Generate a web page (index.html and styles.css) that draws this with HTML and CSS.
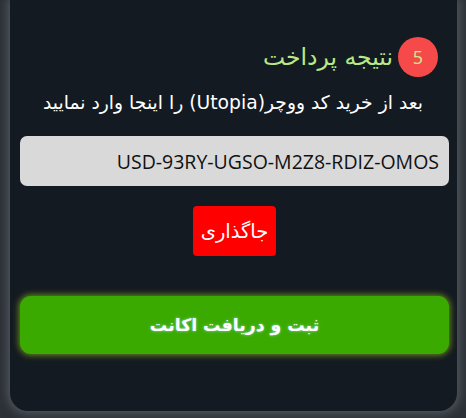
FILE: index.html
```html
<!DOCTYPE html>
<html lang="fa" dir="rtl">
<head>
<meta charset="utf-8">
<link rel="stylesheet" href="styles.css">
</head>
<body>
<div class="card">
  <h2 class="step-title"><span class="badge">5</span><span class="title-text">نتیجه پرداخت</span></h2>
  <p class="hint">بعد از خرید کد ووچر(Utopia) را اینجا وارد نمایید</p>
  <input class="code-input" type="text" value="USD-93RY-UGSO-M2Z8-RDIZ-OMOS" dir="ltr">
  <div class="paste-row"><button class="paste-btn">جاگذاری</button></div>
  <button class="submit-btn">ثبت و دریافت اکانت</button>
</div>
</body>
</html>
```
FILE: styles.css
```css
html, body {
  margin: 0;
  padding: 0;
  background: #2c3137;
  height: 418px;
  overflow: hidden;
}
body {
  padding: 0 9px 0 10px;
  font-family: "DejaVu Sans", "Noto Sans", sans-serif;
}
.card {
  background: #141a21;
  height: 411px;
  border-radius: 0 0 18px 18px;
  box-shadow: 0 0 10px 2px rgba(120, 128, 136, 0.55);
  padding: 37px 8px 0 10px;
  box-sizing: border-box;
  display: flex;
  flex-direction: column;
}
.step-title {
  margin: 0;
  display: flex;
  align-items: center;
  gap: 5px;
  padding-right: 11px;
  font-weight: normal;
  height: 40px;
}
.badge {
  flex: none;
  width: 40px;
  height: 40px;
  border-radius: 50%;
  background: #f64a4a;
  color: #c4f08a;
  font-family: "Open Sans", "Noto Sans", sans-serif;
  font-size: 18px;
  display: flex;
  align-items: center;
  justify-content: center;
}
.title-text {
  color: #b8e986;
  font-size: 23.5px;
  font-family: "DejaVu Sans", sans-serif;
  line-height: 40px;
}
.hint {
  margin: 13px 0 0 0;
  padding-right: 26px;
  color: #ffffff;
  font-size: 18.75px;
  line-height: 26px;
  text-align: right;
}
.code-input {
  margin-top: 20px;
  height: 50px;
  box-sizing: border-box;
  border: none;
  border-radius: 7px;
  background: #d9d9d9;
  color: #111;
  font-family: "Open Sans", "Noto Sans", sans-serif;
  font-size: 19.5px;
  text-align: right;
  padding: 0 10px;
  outline: none;
}
.paste-row {
  display: flex;
  justify-content: center;
  margin-top: 20px;
}
.paste-btn {
  width: 83px;
  height: 50px;
  border: none;
  border-radius: 4px;
  background: #ff0000;
  color: #fff;
  font-family: "DejaVu Sans", sans-serif;
  font-size: 19.5px;
  padding: 0;
}
.submit-btn {
  margin-top: 40px;
  height: 58px;
  border: none;
  border-radius: 11px;
  background: #3aaa00;
  box-shadow: 0 0 6px 1px rgba(150, 200, 30, 0.7);
  color: #fff;
  font-family: "DejaVu Sans", sans-serif;
  font-weight: bold;
  font-size: 17.3px;
  text-shadow: 0 0 3px rgba(160, 230, 255, 0.8);
}
```
